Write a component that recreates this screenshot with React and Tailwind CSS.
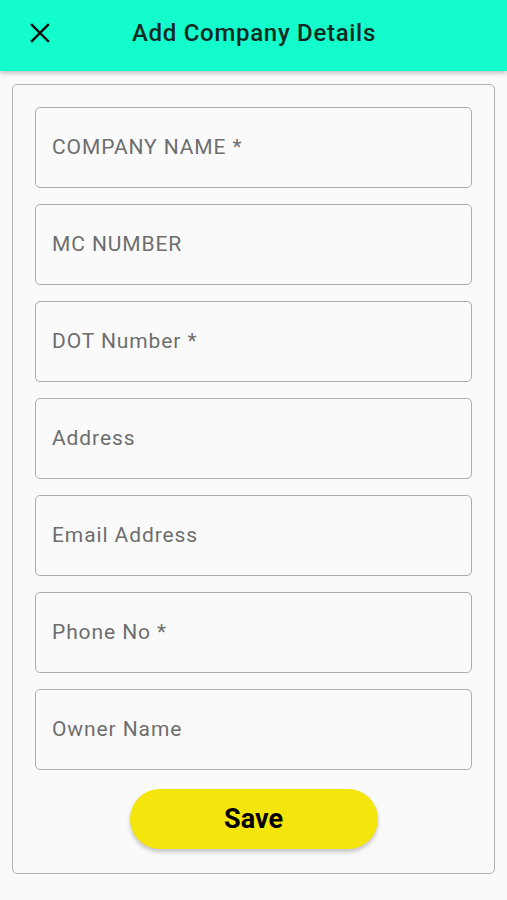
import React from "react";

const fields = [
  "COMPANY NAME *",
  "MC NUMBER",
  "DOT Number *",
  "Address",
  "Email Address",
  "Phone No *",
  "Owner Name",
];

export default function App() {
  return (
    <div className="w-[507px] h-[900px] bg-[#fafafa] flex flex-col" style={{ fontFamily: "Roboto, sans-serif" }}>
      <div className="h-[71px] pb-[5px] bg-[#12fdcb] flex items-center shadow-[0_2px_5px_rgba(0,0,0,0.25)] relative z-10 shrink-0">
        <div className="w-[80px] flex justify-center">
          <svg width="20" height="20" viewBox="0 0 20 20">
            <path d="M2 2 L18 18 M18 2 L2 18" stroke="#0b0b0b" strokeWidth="2.4" strokeLinecap="square" />
          </svg>
        </div>
        <div className="ml-[52px] text-[24px] font-medium text-[#0f2a23] tracking-[0.7px]">Add Company Details</div>
      </div>
      <div className="mx-[12px] mt-[13px] border-[1.5px] border-[#b3b3b3] rounded-[5px] px-[22px] pt-[22px] pb-[24px] flex flex-col gap-[16px]">
        {fields.map((f) => (
          <div key={f} className="h-[81px] border-[1.5px] border-[#adadad] rounded-[5px] flex items-center pl-[16px]">
            <span className="text-[21px] text-[#6e6e6e] tracking-[0.9px]">{f}</span>
          </div>
        ))}
        <div className="flex justify-center mt-[3px]">
          <button className="w-[248px] h-[60px] rounded-full bg-[#f4e50d] text-black text-[27px] font-bold shadow-[0_3px_4px_rgba(0,0,0,0.22)]">
            Save
          </button>
        </div>
      </div>
    </div>
  );
}
